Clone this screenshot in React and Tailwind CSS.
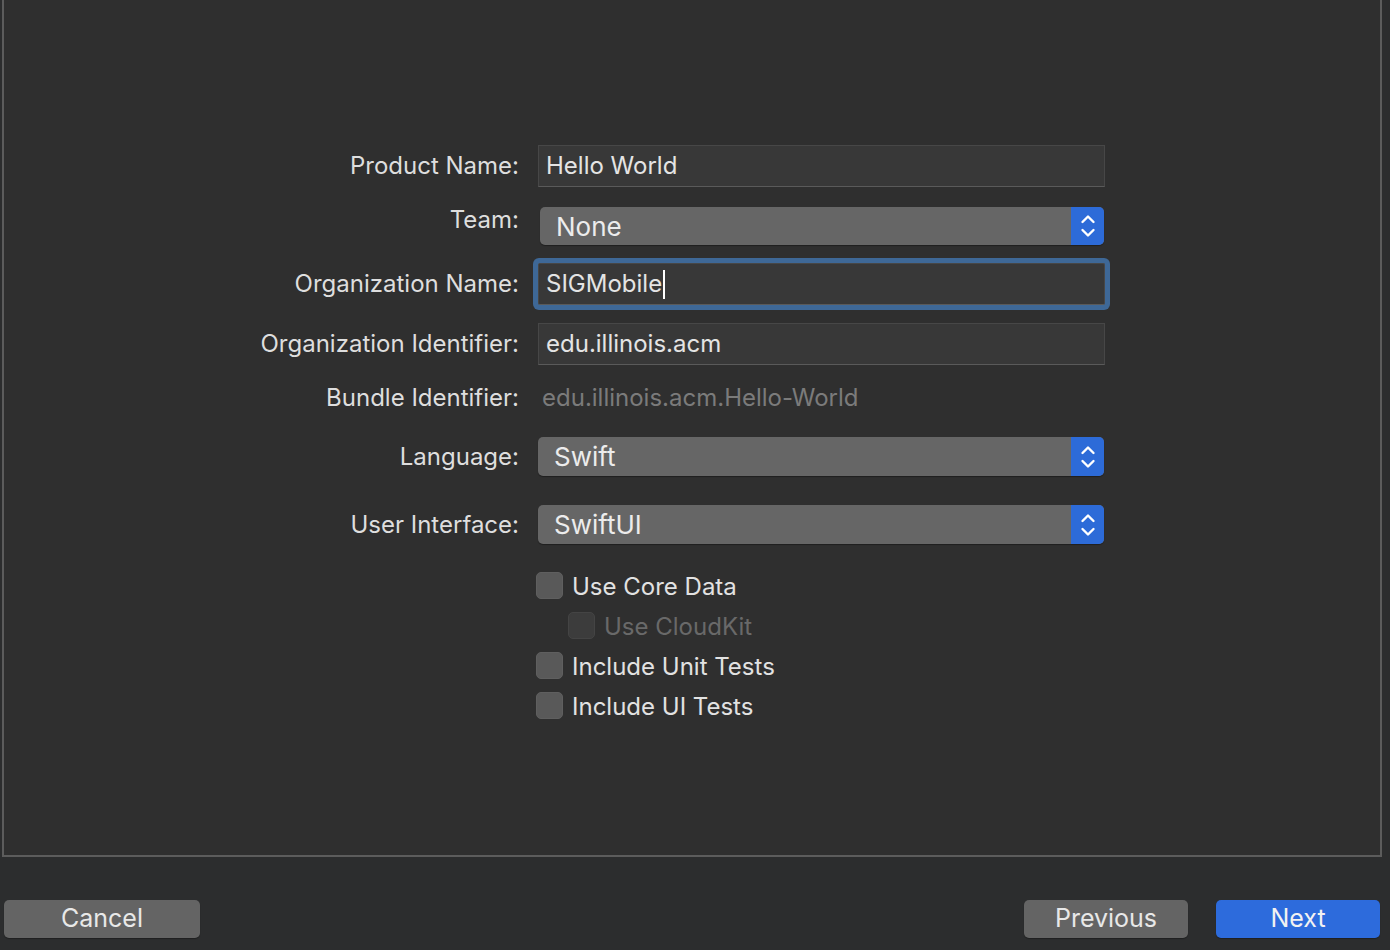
import React from "react";

const font = { fontFamily: "Inter, 'Noto Sans', 'Liberation Sans', sans-serif" };

function Label({ children, className = "" }) {
  return (
    <div className={"w-[515px] shrink-0 pr-0 text-right text-[24px] text-[#dedede] " + className}>
      {children}
    </div>
  );
}

function Field({ value, focused, caret }) {
  return (
    <div
      className={
        "ml-[19px] w-[567px] h-[42px] bg-[#383838] border border-[#474747] border-b-[#5a5a5a] flex items-center pl-[7px] text-[24px] text-[#e4e4e4] " +
        (focused ? "rounded-[2px] shadow-[0_0_0_5px_#3e6897]" : "")
      }
    >
      <span>{value}</span>
      {caret && <span className="inline-block w-[2px] h-[29px] bg-white ml-[1px]" />}
    </div>
  );
}

function Chevrons() {
  return (
    <svg width="18" height="28" viewBox="0 0 18 28" fill="none" stroke="white" strokeWidth="2.4" strokeLinecap="round" strokeLinejoin="round">
      <path d="M3.5 10 L9 4.5 L14.5 10" />
      <path d="M3.5 18 L9 23.5 L14.5 18" />
    </svg>
  );
}

function Popup({ value, ml = "ml-[19px]", w = "w-[566px]", h = "h-[39px]" }) {
  return (
    <div className={ml + " " + w + " " + h + " rounded-[5px] bg-[#666666] flex items-stretch overflow-hidden shadow-[0_1px_1px_rgba(0,0,0,0.35)]"}>
      <div className="flex-1 flex items-center pl-[16px] text-[26px] text-[#ececec]">{value}</div>
      <div className="w-[33px] bg-[#2d6bd8] flex items-center justify-center">
        <Chevrons />
      </div>
    </div>
  );
}

function Check({ label, disabled, indent }) {
  return (
    <div className={"h-[40px] flex items-center " + (indent ? "pl-[564px]" : "pl-[532px]")}>
      <div
        className={
          "w-[27px] h-[27px] rounded-[5px] " +
          (disabled ? "bg-[#3c3c3c] border border-[#444]" : "bg-[#595959] border border-[#5f5f5f]")
        }
      />
      <span className={"ml-[9px] pt-[3px] text-[24px] " + (disabled ? "text-[#696969]" : "text-[#e2e2e2]")}>{label}</span>
    </div>
  );
}

export default function App() {
  return (
    <div className="w-[1390px] h-[950px] bg-[#2c2d2e] flex flex-col overflow-hidden" style={font}>
      <div className="h-[857px] w-[1380px] ml-[2px] shrink-0 border-x-2 border-b-2 border-[#5c5c5c] bg-[#2f2f2f] pt-[145px]">
        {/* Product Name */}
        <div className="flex items-center h-[42px]">
          <Label>Product Name:</Label>
          <Field value="Hello World" />
        </div>
        {/* Team */}
        <div className="flex items-start h-[38px] mt-[20px]">
          <Label className="leading-[26px]">Team:</Label>
          <Popup value="None" ml="ml-[21px]" w="w-[564px]" h="h-[38px]" />
        </div>
        {/* Org Name */}
        <div className="flex items-center h-[42px] mt-[18px]">
          <Label>Organization Name:</Label>
          <Field value="SIGMobile" focused caret />
        </div>
        {/* Org Identifier */}
        <div className="flex items-center h-[42px] mt-[18px]">
          <Label>Organization Identifier:</Label>
          <Field value="edu.illinois.acm" />
        </div>
        {/* Bundle */}
        <div className="flex items-center h-[40px] mt-[13px]">
          <Label>Bundle Identifier:</Label>
          <div className="ml-[23px] text-[24px] text-[#7b7b7b]">edu.illinois.acm.Hello-World</div>
        </div>
        {/* Language */}
        <div className="flex items-center h-[39px] mt-[19px]">
          <Label>Language:</Label>
          <Popup value="Swift" />
        </div>
        {/* User Interface */}
        <div className="flex items-center h-[39px] mt-[29px]">
          <Label>User Interface:</Label>
          <Popup value="SwiftUI" />
        </div>
        <div className="mt-[21px]">
          <Check label="Use Core Data" />
          <Check label="Use CloudKit" disabled indent />
          <Check label="Include Unit Tests" />
          <Check label="Include UI Tests" />
        </div>
      </div>
      <div className="flex items-start pt-[43px] pl-[4px] pr-[10px]">
        <button className="w-[196px] h-[38px] rounded-[5px] bg-[#646464] text-[25px] text-[#e8e8e8] flex items-center justify-center shadow-[0_1px_1px_rgba(0,0,0,0.3)]">
          Cancel
        </button>
        <div className="flex-1" />
        <button className="w-[164px] h-[38px] rounded-[5px] bg-[#646464] text-[25px] text-[#e8e8e8] flex items-center justify-center shadow-[0_1px_1px_rgba(0,0,0,0.3)]">
          Previous
        </button>
        <button className="ml-[28px] w-[164px] h-[38px] rounded-[5px] bg-[#2d6bdc] text-[25px] text-[#f2f2f2] flex items-center justify-center shadow-[0_1px_1px_rgba(0,0,0,0.3)]">
          Next
        </button>
      </div>
    </div>
  );
}
